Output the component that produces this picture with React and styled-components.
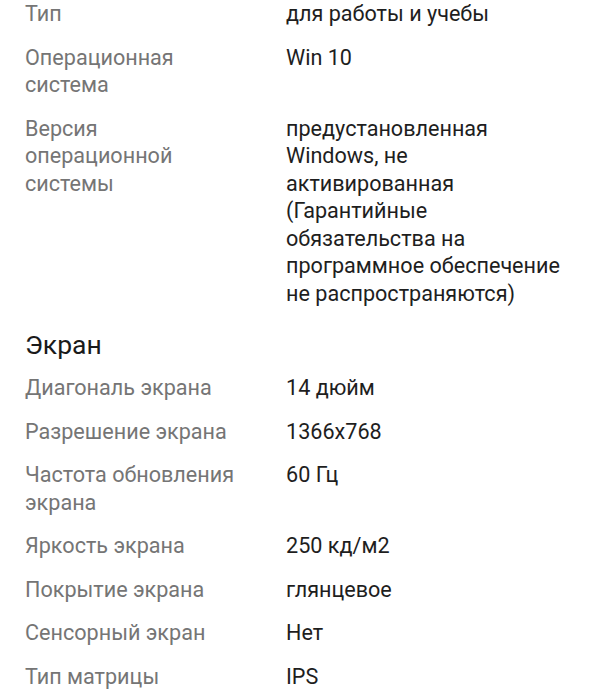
import styled, { createGlobalStyle } from "styled-components";

const GlobalStyle = createGlobalStyle`
    body {
        margin: 0;
        background: #ffffff;
        font-family: Roboto, "Noto Sans", sans-serif;
    }
`;

const specs = [
    { label: "Тип", value: "для работы и учебы" },
    { label: "Операционная система", value: "Win 10" },
    {
        label: "Версия операционной системы",
        value: "предустановленная Windows, не активированная (Гарантийные обязательства на программное обеспечение не распространяются)",
    },
];

const screen = [
    { label: "Диагональ экрана", value: "14 дюйм" },
    { label: "Разрешение экрана", value: "1366x768" },
    { label: "Частота обновления экрана", value: "60 Гц" },
    { label: "Яркость экрана", value: "250 кд/м2" },
    { label: "Покрытие экрана", value: "глянцевое" },
    { label: "Сенсорный экран", value: "Нет" },
    { label: "Тип матрицы", value: "IPS" },
];

const SpecList = ({ items }) => (
    <List>
        {items.map((item) => (
            <Row key={item.label}>
                <Label>{item.label}</Label>
                <Value>{item.value}</Value>
            </Row>
        ))}
    </List>
);

const App = () => {
    return (
        <Page>
            <GlobalStyle />
            <SpecList items={specs} />
            <Heading>Экран</Heading>
            <SpecList items={screen} />
        </Page>
    );
};

export default App;

const Page = styled.div`
    width: 598px;
    padding: 0 0 0 25px;
    box-sizing: border-box;
`;

const List = styled.div`
    display: flex;
    flex-direction: column;
    gap: 16px;
`;

const Row = styled.div`
    display: grid;
    grid-template-columns: 261px 292px;
    font-size: 21.6px;
    line-height: 27.5px;
`;

const Label = styled.div`
    color: #757575;
    max-width: 222px;
`;

const Value = styled.div`
    color: #1e1e1e;
`;

const Heading = styled.div`
    font-size: 26.5px;
    line-height: 32px;
    color: #1a1a1a;
    margin: 22px 0 13px;
`;
